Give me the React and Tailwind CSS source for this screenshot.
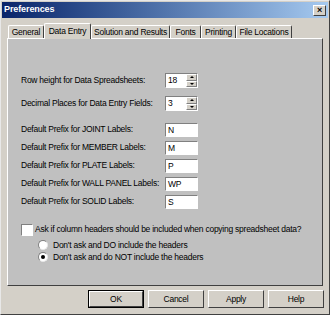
import { useState } from 'react';

const font = { fontFamily: '"Liberation Sans", Arial, sans-serif' };

// Classic Win2k sunken field border
const sunken = 'border border-t-[#808080] border-l-[#808080] border-b-white border-r-white';

const TABS = ['General', 'Data Entry', 'Solution and Results', 'Fonts', 'Printing', 'File Locations'];
const TAB_WIDTHS = [36, 47, 79, 31, 35, 56];

const PREFIXES = [
  { label: 'Default Prefix for JOINT Labels:', value: 'N' },
  { label: 'Default Prefix for MEMBER Labels:', value: 'M' },
  { label: 'Default Prefix for PLATE Labels:', value: 'P' },
  { label: 'Default Prefix for WALL PANEL Labels:', value: 'WP' },
  { label: 'Default Prefix for SOLID Labels:', value: 'S' },
];

function Spinner({ value }) {
  return (
    <div className={`w-[33px] h-[15px] flex bg-white ${sunken}`}>
      <div className="flex-1 pl-[2px] leading-[13px] text-black">{value}</div>
      <div className="w-[11px] flex flex-col bg-[#d4d0c8]">
        <div className="flex-1 flex items-center justify-center border border-t-white border-l-white border-b-[#808080] border-r-[#808080]">
          <span className="w-0 h-0 border-l-[2px] border-r-[2px] border-b-[2px] border-l-transparent border-r-transparent border-b-black" />
        </div>
        <div className="flex-1 flex items-center justify-center border border-t-white border-l-white border-b-[#808080] border-r-[#808080]">
          <span className="w-0 h-0 border-l-[2px] border-r-[2px] border-t-[2px] border-l-transparent border-r-transparent border-t-black" />
        </div>
      </div>
    </div>
  );
}

function TextBox({ value }) {
  return (
    <div className={`w-[33px] h-[14px] bg-white pl-[2px] leading-[12px] text-black ${sunken}`}>
      {value}
    </div>
  );
}

function Radio({ checked, label }) {
  return (
    <div className="h-[12px] flex items-center">
      <span className="w-[10px] h-[10px] rounded-full bg-white border border-t-[#808080] border-l-[#808080] border-b-[#e8e8e8] border-r-[#e8e8e8] flex items-center justify-center">
        {checked && <span className="w-[4px] h-[4px] rounded-full bg-black" />}
      </span>
      <span className="ml-[5px] text-black whitespace-nowrap">{label}</span>
    </div>
  );
}

function Button({ children, isDefault }) {
  return (
    <div className={`w-[56px] h-[18px] ${isDefault ? 'border border-black' : ''}`}>
      <div className="w-full h-full bg-[#d4d0c8] border border-t-white border-l-white border-b-[#404040] border-r-[#404040] flex items-center justify-center text-black">
        {children}
      </div>
    </div>
  );
}

export default function App() {
  const [tab] = useState(1);

  return (
    <div
      style={font}
      className="w-[330px] h-[315px] bg-[#d4d0c8] border border-t-[#e8e8e8] border-l-[#e8e8e8] border-b-[#404040] border-r-[#404040] flex flex-col overflow-hidden text-[8.5px] tracking-[-0.25px]"
    >
      {/* Title bar */}
      <div className="h-[16px] mx-[1px] mt-[1px] flex items-center justify-between bg-gradient-to-r from-[#0a246a] to-[#a6caf0] pl-[2px] pr-[2px]">
        <span className="text-[9px] font-bold text-white tracking-[-0.1px]">Preferences</span>
        <div className="w-[13px] h-[11px] bg-[#d4d0c8] border border-t-white border-l-white border-b-[#404040] border-r-[#404040] flex items-center justify-center text-[9px] font-bold leading-none text-black">
          ×
        </div>
      </div>

      {/* Tabs */}
      <div className="mt-[4px] ml-[7px] h-[16px] flex items-end">
        {TABS.map((t, i) => {
          const active = i === tab;
          return (
            <div
              key={t}
              style={{ width: TAB_WIDTHS[i] }}
              className={`flex items-center justify-center whitespace-nowrap text-black bg-[#d4d0c8] border-l border-t border-r border-l-white border-t-white border-r-[#404040] rounded-t-[2px] ${
                active ? 'h-[16px] relative z-10 -mb-[1px] pb-[1px]' : 'h-[13px]'
              }`}
            >
              {t}
            </div>
          );
        })}
      </div>

      {/* Tab panel */}
      <div className="mx-[6px] h-[248px] bg-[#c0c0c0] border border-t-white border-l-white border-b-[#404040] border-r-[#404040] pl-[13px] pt-[34px]">
        <div className="h-[15px] flex items-center">
          <span className="w-[144px] whitespace-nowrap text-black">Row height for Data Spreadsheets:</span>
          <Spinner value="18" />
        </div>
        <div className="h-[15px] mt-[8px] flex items-center">
          <span className="w-[144px] whitespace-nowrap text-black">Decimal Places for Data Entry Fields:</span>
          <Spinner value="3" />
        </div>
        <div className="mt-[11px] flex flex-col gap-[3px]">
          {PREFIXES.map((p) => (
            <div key={p.label} className="h-[15px] flex items-center">
              <span className="w-[144px] whitespace-nowrap text-black">{p.label}</span>
              <TextBox value={p.value} />
            </div>
          ))}
        </div>

        <div className="mt-[14px] h-[13px] flex items-center">
          <span className={`w-[12px] h-[12px] bg-white ${sunken}`} />
          <span className="ml-[2px] whitespace-nowrap text-black">
            Ask if column headers should be included when copying spreadsheet data?
          </span>
        </div>
        <div className="mt-[3px] ml-[17px] flex flex-col">
          <Radio label="Don't ask and DO include the headers" />
          <Radio checked label="Don't ask and do NOT include the headers" />
        </div>
      </div>

      {/* Buttons */}
      <div className="mt-[4px] pl-[87px] flex gap-[4px]">
        <Button isDefault>OK</Button>
        <Button>Cancel</Button>
        <Button>Apply</Button>
        <Button>Help</Button>
      </div>
    </div>
  );
}
